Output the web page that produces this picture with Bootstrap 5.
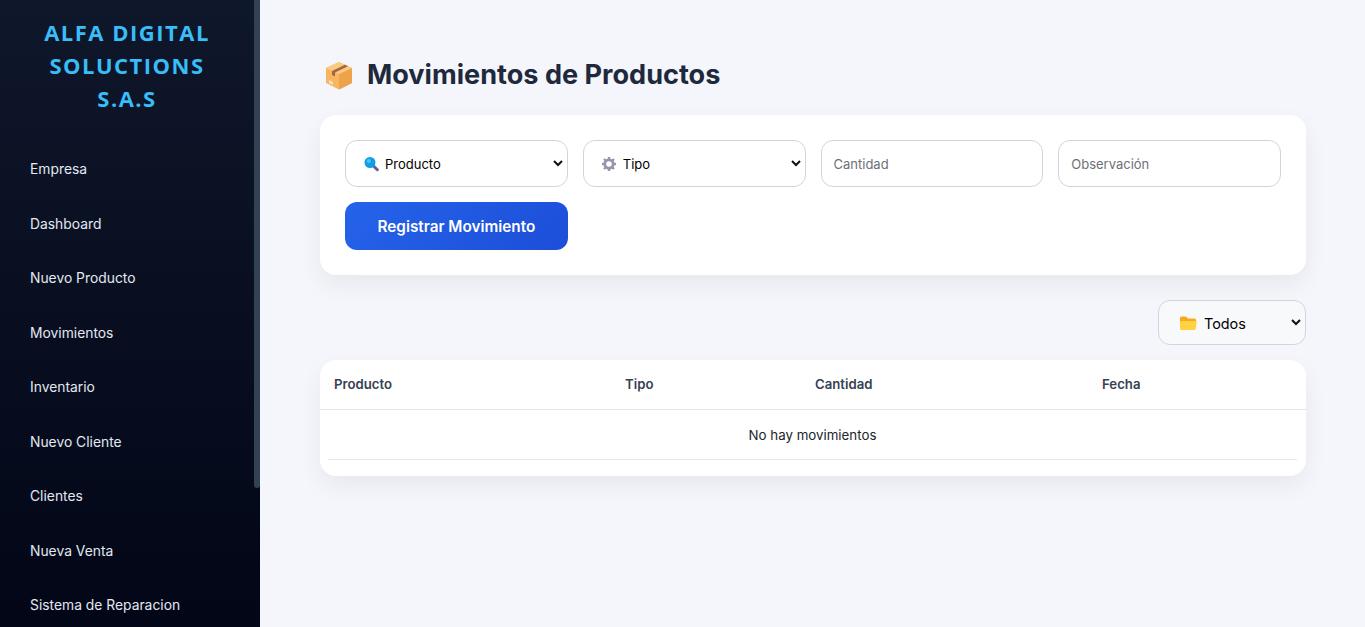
<!DOCTYPE html>
<html lang="es">
<head>
    <meta charset="utf-8">
    <title>Movimientos de Productos</title>
    <link href="https://cdn.jsdelivr.net/npm/bootstrap@5.3.0/dist/css/bootstrap.min.css" rel="stylesheet">
    <style>
        html, body { height: 100%; overflow: hidden; }
        body { background: #f4f6fb; font-family: Inter, "Liberation Sans", sans-serif; color: #000; }

        .side-panel { position: relative; width: 260px; height: 100vh; overflow: hidden; background: linear-gradient(180deg, #0f172a, #020617); padding: 16px 30px 0; }
        /* scrollbar thumb: headless browser hides the real one */
        .side-panel::after { content: ""; position: absolute; top: 0; right: 0; width: 6px; height: 488px; background: #334155; border-radius: 0 0 3px 3px; }
        .brand-name { font-family: "Open Sans", sans-serif; font-weight: 700; font-size: 22px; line-height: 33px; letter-spacing: 1.5px; color: #38bdf8; text-align: center; margin-bottom: 32.4px; padding-right: 6px; }
        .side-link { color: #e2e8f0; font-size: 13.85px; line-height: 21.6px; padding: 12px 0; margin-bottom: 8.9px; }
        .side-link:hover { color: #fff; }

        .main-area { padding: 55px 59px 0 60px; min-width: 0; }
        .page-title { font-size: 27.1px; font-weight: 700; line-height: 40px; color: #1e293b; margin: 0 0 20px; gap: 14px; padding-left: 5px; }

        .panel-box { background: #fff; border-radius: 16px; box-shadow: 0 10px 25px rgba(15, 23, 42, .06); }
        .form-box { padding: 25px; margin-bottom: 25px; }
        .form-cols { display: grid; grid-template-columns: repeat(4, 1fr); gap: 15px; }

        .field-ctl.form-control, .field-ctl.form-select { height: 47px; border: 1px solid #d1d5db; border-radius: 12px; font-size: 13px; padding: 0 12px; color: #000; box-shadow: none; }
        .field-ctl.form-control::placeholder { color: #6f6f76; opacity: 1; }
        .field-ctl.form-select, .filter-ctl.form-select { background-image: url("data:image/svg+xml,%3csvg xmlns='http://www.w3.org/2000/svg' viewBox='0 0 10 7'%3e%3cpath fill='none' stroke='%23111' stroke-width='2' d='M1 1l4 4 4-4'/%3e%3c/svg%3e"); background-size: 10px 7px; background-position: right 4px center; }
        .field-ctl.form-select { padding: 2px 0 0 39px; }
        .emoji-wrap { position: relative; }
        .emoji-ico { position: absolute; pointer-events: none; top: 50%; transform: translateY(-50%); }
        .ico-search { left: 19px; width: 15px; height: 15px; }
        .ico-gear { left: 19px; width: 14px; height: 14px; }
        .ico-folder { left: 22px; width: 17px; height: 15px; }

        .save-btn { height: 48px; border: 0; border-radius: 12px; padding-top: 8px; background: linear-gradient(135deg, #2563eb, #1d4ed8); color: #fff; font-size: 15.3px; font-weight: 600; }
        .save-btn:hover { color: #fff; }

        .filter-holder { width: 148px; margin-bottom: 15px; }
        .filter-ctl.form-select { height: 45px; border: 1px solid #d1d5db; border-radius: 12px; background-color: #f8f9fa; font-size: 14.4px; padding: 2px 0 0 45px; color: #000; }

        .table-box { overflow: hidden; padding-bottom: 16px; }
        .moves-table { table-layout: fixed; margin: 0; font-size: 13.3px; }
        .moves-table th { font-weight: 600; font-size: 13.2px; color: #374151; padding: 2px 14px 0; height: 49px; vertical-align: middle; border-bottom: 1px solid #e1e3e8; box-shadow: none; }
        .moves-table td { border: 0; padding: 0 9px 0 8px; box-shadow: none; }
        .empty-line { height: 50px; line-height: 50px; text-align: center; border-bottom: 1px solid #e5e7eb; }
        .col-a { width: 291px; }
        .col-b { width: 190px; }
        .col-c { width: 287px; }
    </style>
</head>
<body>
    <div class="d-flex">
        <aside class="side-panel flex-shrink-0">
            <div class="brand-name">ALFA DIGITAL SOLUCTIONS S.A.S</div>
            <nav class="nav flex-column">
                <a class="nav-link side-link" href="#">Empresa</a>
                <a class="nav-link side-link" href="#">Dashboard</a>
                <a class="nav-link side-link" href="#">Nuevo Producto</a>
                <a class="nav-link side-link" href="#">Movimientos</a>
                <a class="nav-link side-link" href="#">Inventario</a>
                <a class="nav-link side-link" href="#">Nuevo Cliente</a>
                <a class="nav-link side-link" href="#">Clientes</a>
                <a class="nav-link side-link" href="#">Nueva Venta</a>
                <a class="nav-link side-link" href="#">Sistema de Reparacion</a>
            </nav>
        </aside>

        <main class="main-area flex-grow-1">
            <h1 class="page-title d-flex align-items-center">
                <svg width="28" height="29" viewBox="0 0 28 29">
                    <path fill="#f7b55f" d="M14 1L27 7v15l-13 6.500L1 22V7z"/>
                    <path fill="#eea24a" d="M14 13L27 7v15l-13 6.500z"/>
                    <path fill="#fbcb85" d="M14 1L27 7l-13 6L1 7z"/>
                    <path fill="#a5673f" d="M7 10l13-6.200 3 1.400L10 11.500v4l-3-1.400z"/>
                    <path fill="#f3e3cd" d="M4 19l4 2v3l-4-2z"/>
                </svg>
                Movimientos de Productos
            </h1>

            <section class="panel-box form-box">
                <form class="form-cols">
                    <div class="emoji-wrap">
                        <select class="form-select field-ctl"><option>Producto</option></select>
                        <svg class="emoji-ico ico-search" viewBox="0 0 15 15">
                            <path stroke="#6b5b95" stroke-width="3" stroke-linecap="round" d="M9.500 9.500l3.800 3.800"/>
                            <circle cx="6" cy="6" r="5.500" fill="#0f9fe6"/>
                            <circle cx="4.800" cy="4.500" r="2" fill="#4cc3f5"/>
                        </svg>
                    </div>
                    <div class="emoji-wrap">
                        <select class="form-select field-ctl"><option>Tipo</option></select>
                        <svg class="emoji-ico ico-gear" viewBox="0 0 14 14">
                            <circle cx="7" cy="7" r="4.200" fill="none" stroke="#9b93ab" stroke-width="2.800"/>
                            <path stroke="#9b93ab" stroke-width="2.400" d="M7 0v3M7 11v3M0 7h3M11 7h3M2 2l2 2M10 10l2 2M12 2l-2 2M4 10l-2 2"/>
                        </svg>
                    </div>
                    <input class="form-control field-ctl" type="text" placeholder="Cantidad">
                    <input class="form-control field-ctl" type="text" placeholder="Observación">
                    <button class="btn save-btn" type="button">Registrar Movimiento</button>
                </form>
            </section>

            <div class="d-flex justify-content-end">
                <div class="emoji-wrap filter-holder">
                    <select class="form-select filter-ctl"><option>Todos</option></select>
                    <svg class="emoji-ico ico-folder" viewBox="0 0 17 15">
                        <path fill="#f9a825" d="M0 2.500A1.500 1.500 0 0 1 1.500 1h4.500l2 2h6.500A1.500 1.500 0 0 1 16 4.500V8H0z"/>
                        <path fill="#ffd23f" d="M1.500 5.500h14a1.200 1.200 0 0 1 1.200 1.400l-1.100 6.400a1.500 1.500 0 0 1-1.500 1.200H1.500A1.500 1.500 0 0 1 0 13V7a1.500 1.500 0 0 1 1.500-1.500z"/>
                    </svg>
                </div>
            </div>

            <section class="panel-box table-box">
                <table class="table moves-table">
                    <colgroup><col class="col-a"><col class="col-b"><col class="col-c"><col></colgroup>
                    <thead>
                        <tr><th>Producto</th><th>Tipo</th><th>Cantidad</th><th>Fecha</th></tr>
                    </thead>
                    <tbody>
                        <tr><td colspan="4"><div class="empty-line">No hay movimientos</div></td></tr>
                    </tbody>
                </table>
            </section>
        </main>
    </div>
</body>
</html>
